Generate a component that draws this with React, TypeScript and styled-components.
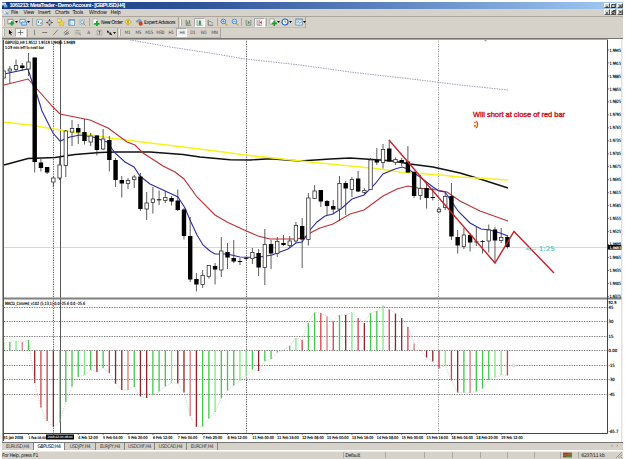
import React from 'react';
import styled, { createGlobalStyle } from 'styled-components';

const GlobalStyle = createGlobalStyle`
  body {
    margin: 0;
    background: #fff;
    overflow: hidden;
  }
`;

const face = '#d6d2ca';

const Terminal = styled.div`
  box-sizing: border-box;
  width: 625px;
  height: 459px;
  padding: 2px 2px 0 2px;
  display: flex;
  flex-direction: column;
  background: #fff;
  font-family: 'DejaVu Sans Condensed', 'Liberation Sans', sans-serif;
  font-size: 5px;
  color: #111;
  white-space: nowrap;
  cursor: default;
`;

const TitleBar = styled.header`
  height: 6.5px;
  flex: none;
  display: flex;
  align-items: center;
  background: linear-gradient(90deg, #17377f 0%, #2d5196 30%, #6488c4 65%, #a3cbf4 100%);
  color: #fff;
`;

const TitleText = styled.span`
  flex: 1;
  margin-left: 1.5px;
  font: bold 5.6px/7px 'Liberation Sans', sans-serif;
  letter-spacing: -0.53px;
`;

const MenuBar = styled.nav`
  height: 8px;
  flex: none;
  display: flex;
  align-items: center;
  background: ${face};
  border-bottom: 1px solid #aaa79f;
  box-sizing: border-box;
`;

const MenuItem = styled.span<{ $width: number }>`
  width: ${(p) => p.$width}px;
  font-size: 5.4px;
  line-height: 7px;
  letter-spacing: -0.25px;
`;

const WindowButtons = styled.div`
  margin-left: auto;
  display: flex;
`;

const WindowButton = styled.span<{ $gap?: boolean }>`
  box-sizing: border-box;
  width: 6px;
  height: 5.5px;
  margin-left: ${(p) => (p.$gap ? 1.5 : 0)}px;
  display: flex;
  background: #d4d0c8;
  border: solid #fff;
  border-width: 0.5px 1px 1px 0.5px;
  border-right-color: #555;
  border-bottom-color: #555;
`;

const Toolbar = styled.div<{ $height: number }>`
  height: ${(p) => p.$height}px;
  flex: none;
  display: flex;
  align-items: center;
  background: ${face};
`;

const ToolbarEdge = styled.div`
  height: 1.5px;
  flex: none;
  background: #77756f;
`;

const ToolGroup = styled.div<{ $width: number }>`
  box-sizing: border-box;
  width: ${(p) => p.$width}px;
  height: 100%;
  display: flex;
  align-items: center;
  border-right: 1px solid #aaa69e;
  box-shadow: inset 0 -1px #c2beb6;
`;

const Grip = styled.span`
  width: 1px;
  height: 7px;
  margin: 0 1px;
  flex: none;
  background: #f4f2ee;
  border-right: 1px solid #b1ada4;
`;

const ToolButton = styled.span<{ $width?: number; $pressed?: boolean }>`
  box-sizing: border-box;
  width: ${(p) => p.$width ?? 11}px;
  height: 9px;
  flex: none;
  display: flex;
  align-items: center;
  justify-content: center;
  font-size: 4.6px;
  letter-spacing: -0.35px;
  color: #444;
  background: ${(p) => (p.$pressed ? '#f4f2ee' : 'transparent')};
  border: ${(p) => (p.$pressed ? '1px solid' : '0')};
  border-color: #aaa #fff #fff #aaa;
`;

const Label = styled.span<{ $width: number }>`
  width: ${(p) => p.$width}px;
  flex: none;
  font-size: 5.3px;
  letter-spacing: -0.42px;
  color: #000;
`;

const Separator = styled.span`
  width: 1px;
  height: 8px;
  flex: none;
  margin: 0 1px;
  background: #aba79f;
`;

const ChartFrame = styled.main`
  height: 403px;
  flex: none;
  border-left: 1px solid #a7a59f;
  background: #fff;
`;

const Chart = styled.svg`
  display: block;
`;

const TabStrip = styled.div`
  height: 7.5px;
  flex: none;
  display: flex;
  background: ${face};
  border-top: 1px solid #777;
  box-sizing: border-box;
`;

const Tab = styled.span<{ $width: number; $active?: boolean }>`
  box-sizing: border-box;
  width: ${(p) => p.$width}px;
  flex: none;
  text-align: center;
  font-size: 5px;
  line-height: 6px;
  letter-spacing: -0.38px;
  color: ${(p) => (p.$active ? '#000' : '#444')};
  background: ${(p) => (p.$active ? '#fff' : 'transparent')};
  border-right: 1px solid #88857e;
`;

const TabArrows = styled.span`
  margin-left: auto;
  width: 12px;
  font-size: 5px;
  line-height: 5px;
  word-spacing: 2px;
  color: #555;
`;

const StatusBar = styled.footer`
  height: 8.5px;
  flex: none;
  margin-top: 1px;
  display: flex;
  align-items: center;
  background: ${face};
  border-top: 1px solid #eceae6;
  box-sizing: border-box;
`;

const StatusCell = styled.span<{ $width: number }>`
  box-sizing: border-box;
  width: ${(p) => p.$width}px;
  height: 6px;
  flex: none;
  display: flex;
  align-items: center;
  font-size: 5.2px;
  letter-spacing: -0.33px;
  border-right: 1px solid #aaa79f;
  &:last-of-type {
    border-right: 0;
  }
`;

const icons: Record<string, React.ReactNode> = {
  app: <><rect x="0" y="1" width="6" height="4" fill="#fff" /><path d="M3 4h5v4H3z" fill="#75c4eb" /><path d="M1 3h4M4 6h3" stroke="#397fb5" /></>,
  newChart: <><path d="M1 1.5h6v5H1z" fill="#f8fff8" stroke="#789" /><path d="M3 6h5M5.5 3.5v5" stroke="#16a82b" strokeWidth="2" /></>,
  profiles: <><path d="M1 1.5h6v4H1z" fill="#eaf5ff" stroke="#568bc5" /><path d="M3 4.5h5.5v3.5H3z" fill="#b9dcfa" stroke="#568bc5" /></>,
  market: <><path d="M1 1h7v7H1z" fill="#fff" stroke="#5894c4" /><path d="M2 4l2-2v4z" fill="#17a34b" /><path d="M5 5l2-1v3z" fill="#d2332c" /></>,
  target: <><circle cx="4.5" cy="4.5" r="2.5" fill="none" stroke="#777" /><path d="M4.5 0v3M4.5 6v3M0 4.5h3M6 4.5h3" stroke="#444" /></>,
  folder: <><path d="M0 1h5v4H0z" fill="#f5df6c" stroke="#a99538" strokeWidth=".5" /><path d="M5 3l1.2 2 2.3.3-1.6 1.5.4 2.1L5 7.8 3 8.9l.3-2.1L2 5.3 4 5z" fill="#ffda35" stroke="#a88b1e" strokeWidth=".4" /></>,
  panel: <><path d="M1 1h7.5v7H1z" fill="#fff" stroke="#4a83bd" /><path d="M1 1.5h7M2.5 2v6" stroke="#4a83bd" /><path d="M4 4h3M4 6h3" stroke="#9bb" strokeWidth=".6" /></>,
  tester: <><path d="M1 1h6v6H1z" fill="#eef5fa" stroke="#8198aa" strokeWidth=".6" /><circle cx="4" cy="4" r="2" fill="none" stroke="#5992bd" /><path d="M5.5 5.5l3 3" stroke="#ad8850" /></>,
  order: <><path d="M1 1h5v6H1z" fill="#fff" stroke="#999" strokeWidth=".6" /><path d="M2.5 6.5h6M5.5 3.5v5.5" stroke="#15a72f" strokeWidth="2" /></>,
  warning: <><path d="M4.5.8l3.8 3.7-3.8 3.7L.8 4.5z" fill="#ffe544" stroke="#aa931c" strokeWidth=".7" /><path d="M4.5 2.5v3M4.5 6v1" stroke="#655" /></>,
  expert: <><path d="M1 4l4-3 3 3-3 2z" fill="#62a9df" stroke="#447ba4" strokeWidth=".4" /><path d="M1 5h4v3z" fill="#e7c257" /><circle cx="6.5" cy="6.5" r="2.2" fill="#d83722" /></>,
  bars: <path d="M1.5 1v7H8M3.5 3v4M3.5 6h1M6 1.5v5M5 3h1" fill="none" stroke="#2f6b40" strokeWidth=".9" />,
  candles: <><path d="M1.5 1v7H8" fill="none" stroke="#555" strokeWidth=".7" /><path d="M4 3h2v4H4zM5 1v2" fill="#15a944" stroke="#16823a" strokeWidth=".7" /></>,
  line: <><path d="M1.5 1v7H8" fill="none" stroke="#444" strokeWidth=".8" /><path d="M2 4l2-1 3 2h1" fill="none" stroke="#478260" strokeWidth=".8" /></>,
  zoomIn: <><path d="M5 5l3.4 3.4" stroke="#cba738" strokeWidth="1.4" /><circle cx="3.8" cy="3.8" r="2.6" fill="#d5ecff" stroke="#397bc0" /><path d="M2.5 3.8h2.6M3.8 2.5v2.6" stroke="#397bc0" strokeWidth=".8" /></>,
  zoomOut: <><path d="M5 5l3.4 3.4" stroke="#cba738" strokeWidth="1.4" /><circle cx="3.8" cy="3.8" r="2.6" fill="#d5ecff" stroke="#397bc0" /><path d="M2.5 3.8h2.6" stroke="#397bc0" strokeWidth=".8" /></>,
  scroll: <><path d="M1.5 1v7H8M7.5 1v7" fill="none" stroke="#555" strokeWidth=".7" /><path d="M3.5 2l3 2.5-3 2.5z" fill="#27a852" /></>,
  shift: <><path d="M1.5 1v7H8M4 1v7" fill="none" stroke="#555" strokeWidth=".7" /><path d="M7.5 2.5l-3 2 3 2z" fill="#bd3434" /></>,
  indicators: <><path d="M1 1h5v6H1z" fill="#fff" stroke="#888" strokeWidth=".7" /><path d="M3 6h6M6 3v6" stroke="#16a52b" strokeWidth="2" /></>,
  clock: <><circle cx="4.5" cy="4.5" r="3.4" fill="#f6fbff" stroke="#2866b4" strokeWidth="1.3" /><path d="M4.5 2.5v2l1.5 1" fill="none" stroke="#345" strokeWidth=".7" /></>,
  template: <><path d="M.8 1h7.5v7H.8z" fill="#d8eaf8" stroke="#6087a5" strokeWidth=".8" /><path d="M1 2h7M2 5l2-1 1 2 3-2" fill="none" stroke="#6087a5" strokeWidth=".7" /></>,
  cursor: <path d="M2.5 1l4.5 4H5l1 2.7-1 .4-1-2.7L2.5 7z" fill="#111" />,
  cross: <path d="M4.5 1v7M1 4.5h7" stroke="#444" strokeWidth=".8" />,
  vertical: <path d="M4.5 1v7" stroke="#555" strokeWidth=".8" />,
  horizontal: <path d="M1.5 4.5h6.5" stroke="#555" strokeWidth=".9" />,
  diagonal: <path d="M1.5 8l6-7" stroke="#555" strokeWidth=".8" />,
  channel: <path d="M1 5l5-4M2 8l6-5M2 6l4 1M4 4l4 2" fill="none" stroke="#555" strokeWidth=".8" />,
  fibo: <><path d="M1 2h7M1 4.2h7M1 6.4h7" stroke="#777" strokeDasharray="1 .6" strokeWidth=".8" /><path d="M6 6h2v2.5" fill="none" stroke="#777" strokeWidth=".7" /></>,
  textBox: <><path d="M1.3 1.3h6.4v6.4H1.3z" fill="none" stroke="#666" strokeWidth=".6" strokeDasharray="1 .5" /><path d="M3 3h3M4.5 3v4" stroke="#444" strokeWidth=".8" /></>,
  arrows: <path d="M1 2l3 .5-.8 1 2 1.5.8-1 2 4-4-1 .8-1-2-1.5-.8 1z" fill="#222" />,
};

const Icon: React.FC<{ name: string; size?: number }> = ({ name, size = 8 }) => (
  <svg width={size} height={size} viewBox="0 0 9 9" style={{ flex: 'none' }}>{icons[name]}</svg>
);

const Caret = () => (
  <svg width="3" height="2" viewBox="0 0 3 2"><path d="M0 0h3L1.5 2z" fill="#111" /></svg>
);

const menus: [string, number][] = [
  ['File', 12.5], ['View', 14.5], ['Insert', 17], ['Charts', 17.5], ['Tools', 16.5], ['Window', 21.5], ['Help', 14],
];

const periods = ['M1', 'M5', 'M15', 'M30', 'H1', 'H4', 'D1', 'W1', 'MN'];

const tabs: [string, number][] = [
  ['EURUSD,H4', 32], ['GBPUSD,H4', 31], ['USDJPY,H4', 31], ['EURJPY,H4', 29], ['USDCHF,H4', 30], ['USDCAD,H4', 32], ['EURCHF,H4', 31],
];

const barX = (i: number) => 3.6 + i * 6.22;

// high, body top, body bottom, low, 1 for a bear candle
const candles = [
  [67, 71, 78, 79, 0], [66, 69, 71, 83, 0], [59.5, 65.5, 69.5, 71, 0], [63, 65.5, 68, 71, 1], [53, 62, 69, 76, 0],
  [57.5, 57.5, 162, 172.5, 1], [159, 162.5, 168, 171.5, 1], [167, 167, 172.5, 174, 1], [177, 178, 182, 187, 0], [156, 165, 178, 180, 0],
  [130, 131, 165.5, 177, 0], [120, 128.5, 132, 146, 0], [124, 128, 132.5, 144, 1], [119, 132, 141, 144.5, 1], [133, 136, 142, 146, 0],
  [135, 135.5, 150, 155.5, 1], [129, 139, 149, 150, 0], [136, 140, 160, 171.5, 1], [158, 160, 180, 187, 1], [176, 180, 183.5, 197.5, 1],
  [178, 180.5, 183.5, 189, 0], [175, 177, 179.5, 188, 0], [173, 176.5, 209, 211, 1], [192, 203, 209, 220, 0], [187, 199, 202.5, 213.5, 0],
  [190.5, 199.3, 200.3, 205, 1], [191, 197.5, 200.5, 203, 0], [196, 198, 201.5, 205.5, 1], [189.5, 200.5, 210, 211, 1], [208, 209.5, 236, 239.5, 1],
  [217, 236, 279.5, 282, 1], [273, 279, 284.5, 291.5, 1], [270, 275.5, 284.5, 288, 0], [265, 265.5, 276.5, 278.5, 0], [263, 266, 269.5, 284.5, 1],
  [237, 251, 270, 277, 0], [243, 252, 257.5, 269, 1], [240, 258, 261.5, 263, 1], [258, 261, 262, 265, 1], [257, 257.8, 258.8, 260, 1],
  [248, 252.5, 258.5, 264, 0], [249, 253, 267.5, 276, 1], [229, 244.5, 267.5, 285, 0], [240, 244, 253.5, 269, 1], [237, 241.5, 253.5, 257, 0],
  [235, 243, 245, 246, 1], [236, 241, 245.5, 248, 0], [222, 225.5, 241, 243, 0], [218, 226, 239.5, 268, 1], [193, 198, 239.5, 245.5, 0],
  [185, 191, 198.5, 199, 0], [190, 190, 201.5, 207, 1], [200, 201, 206, 215, 1], [200, 206, 209.5, 214, 1], [176, 183.5, 209, 221, 0],
  [181, 183, 188.5, 215, 1], [177, 179.5, 189.5, 197, 0], [171, 178.5, 191.5, 192, 1], [188, 190.5, 192.5, 194, 0], [158, 160, 189.5, 190, 0],
  [148, 160, 162.5, 165, 1], [144, 149.5, 162.5, 168.5, 0], [140, 148.5, 161.5, 162, 1], [157.5, 159.5, 162.5, 165, 0], [158, 160, 162, 166, 1],
  [146, 161.5, 172.5, 173, 1], [171, 172, 196, 198, 1], [175, 188.5, 195.5, 200, 0], [182, 188, 198, 208.5, 1], [188, 197, 198, 200.5, 1],
  [207, 209.2, 211.8, 213, 0], [192, 196.5, 207.5, 210, 0], [183, 196, 236.5, 240, 1], [230, 237, 245.5, 253.5, 1], [228, 235, 246.5, 249, 0],
  [233, 235, 242.5, 251.5, 1], [227, 241.5, 242.3, 246, 1], [240, 241, 241.8, 253.5, 1], [224.5, 230, 241, 252.5, 0], [227, 229.5, 240.5, 262, 1],
  [228, 237.5, 240.5, 243, 0], [235, 237, 247, 248.5, 1],
];

const histogram = [
  343, 342, 341, 342, 340, 383, 407.5, 421, 427, 422.5, 402, 386.5, 377, 375, 370, 372, 368, 373, 384, 390,
  390, 387, 396.5, 398, 395, 391.5, 386.5, 383, 383.5, 392.5, 416, 427, 426.5, 418.5, 412, 398, 390.5, 385.5, 381, 376,
  369.5, 371, 361, 359, 352.5, 350, 346, 338, 340, 323, 312.5, 313, 316.5, 321.5, 315, 315, 312.5, 318, 323, 313,
  311, 305.5, 309.5, 313.5, 318, 327, 343.5, 350, 357.5, 361.5, 368.5, 365.5, 380.5, 392.5, 392.5, 393, 391.5, 388.5, 380, 377.5,
  375, 375.5,
];
// g/G rising, r/R/D falling; one letter per bar
const shades = 'GGgrGDRRDgGGGgGDGRDDrGDDGGGgDDrDGGgGGGggGDGGGGGgRGGRrRGDgRDGGgRDDRrRDDRgRDGrGGGggR';
const shadeColors: Record<string, string> = { g: '#84e584', G: '#43c64a', r: '#d67b7b', R: '#cf4048', D: '#8f2228' };

const blueLine = '4,74 28,69 34,88 37,95 42,111 48,123 53,133 60,141 70,137 80,135 93,137 107,142 115,153 125,162 134,167 140,176 150,184 163,190 178,197 185,208 190,220 197,235 203,245 210,251 215,254 227,254 240,257 257,257.5 272,255 288,249 296,243 302,242 307,235 310,230 317,222 325,216 333,214 342,208 352,199 364,195 375,184 383,174 395,169 402,167 408,169 420,177 433,187 439,191 445,192 452,202 458,211 470,223 481,229 490,230 500,233 508,236';
const redLine = '4,85 28,79 37,89 53,107 60,114 90,120 108,128 127,142 135,145 143,153 160,164 163,166 175,172 184,179 197,197 215,215 227,222 242,229 258,236 270,239 297,239 305,237 310,233 320,228 333,224 350,214 364,210 383,196 397,189 408,186 418,188 437,190 447,192 460,201 480,211 508,221';
const yellowLine = '4,122 30,125 60,130 110,138 150,143 200,149 246,155 310,162 380,169 400,172 440,175 460,177 508,180';
const blackLine = '4,165 28,158.5 55,157.5 75,154.5 100,152.5 115,152 150,152 183,154.5 200,157 230,159.7 250,160 270,158.8 300,161 330,159 350,158 380,160 393,161 410,164 433,167 460,173 480,179 508,188';
const slowLine = '125,39 170,47 210,53 245,59 300,65 350,72 420,80 460,85 508,90';

const dates = [
  '31 Jan 2008', '1 Feb 08:00', '', '4 Feb 12:00', '5 Feb 04:00', '5 Feb 20:00', '6 Feb 12:00', '7 Feb 04:00', '7 Feb 20:00',
  '8 Feb 12:00', '11 Feb 00:00', '11 Feb 16:00', '12 Feb 08:00', '13 Feb 00:00', '13 Feb 16:00', '14 Feb 08:00', '15 Feb 00:00',
  '15 Feb 16:00', '18 Feb 04:00', '18 Feb 20:00', '19 Feb 12:00',
];

const levels: [string, number][] = [
  ['45', 307.5], ['30', 321.5], ['15', 336.5], ['0.00', 350.5], ['-15', 365.5], ['-30', 379.5], ['-45', 394.5],
];

const AxisText = styled.text<{ $size?: number; $color?: string }>`
  font-family: 'DejaVu Sans Condensed', sans-serif;
  font-size: ${(p) => p.$size ?? 4.3}px;
  fill: ${(p) => p.$color ?? '#000'};
  stroke: ${(p) => p.$color ?? '#000'};
  stroke-width: 0.15px;
`;

const Note = styled.text`
  font-family: 'Liberation Sans', sans-serif;
  font-size: 6.8px;
  fill: #cc1a22;
  stroke: #cc1a22;
  stroke-width: 0.35px;
`;

const PriceChart = () => (
  <Chart width="620" height="403" viewBox="3 39 620 403">
    <rect x="3" y="39" width="620" height="403" fill="#fff" />
    <path d="M3 247.5H607" stroke="#d8d8d8" />
    <path d="M53.5 39V433M246.5 39V433" stroke="#555" strokeDasharray="1.2 1.2" />
    <path d="M438.5 39V433" stroke="#999" strokeDasharray="1.2 1.2" />
    <path d="M60.5 39V433" stroke="#555" />

    <polyline points={slowLine} fill="none" stroke="#8a84ad" strokeWidth=".8" strokeDasharray="1.5 1" />
    <polyline points={blackLine} fill="none" stroke="#111" strokeWidth="1.4" />
    <polyline points={yellowLine} fill="none" stroke="#f7f31c" strokeWidth="1.7" />
    <polyline points={redLine} fill="none" stroke="#bd2f34" strokeWidth="1.1" />
    <polyline points={blueLine} fill="none" stroke="#2a2da8" strokeWidth="1.1" />

    {candles.map(([high, top, bottom, low, bear], i) => (
      <g key={i}>
        <path d={`M${barX(i)} ${high}V${low}`} stroke="#333" strokeWidth=".8" />
        <rect
          x={barX(i) - (bear ? 2.2 : 1.7)}
          y={top}
          width={bear ? 4.4 : 3.4}
          height={bottom - top}
          fill={bear ? '#000' : '#fff'}
          stroke={bear ? 'none' : '#333'}
          strokeWidth=".8"
        />
      </g>
    ))}

    <polyline points="389,140 495,263 514,231.5 554,273" fill="none" stroke="#c4242a" strokeWidth="1.4" />
    <Note x="473" y="117.2" textLength="92" lengthAdjust="spacingAndGlyphs">Will short at close of red bar</Note>
    <Note x="474" y="126">;)</Note>
    <AxisText x="525" y="251" textLength="30" lengthAdjust="spacingAndGlyphs" $size={6.5} $color="#4ec4cb">{'<-- 1:25'}</AxisText>

    <AxisText x="5" y="44" textLength="70" lengthAdjust="spacingAndGlyphs">GBPUSD,H4  1.9512 1.9519 1.9486 1.9489</AxisText>
    <AxisText x="5" y="48.5" textLength="39" lengthAdjust="spacingAndGlyphs" $size={4}>1:25 min left to next bar</AxisText>
    <path d="M483.5 39.5h4l-2 2z" fill="#999" />

    <rect x="3" y="297.5" width="619" height="2" fill="#808080" />
    {levels.map(([text, y]) => (
      <g key={text}>
        <path d={`M4 ${y}H607`} stroke="#555" strokeWidth=".8" strokeDasharray="1.3 1.2" />
        <AxisText x="608.5" y={y + 1.7}>{text}</AxisText>
      </g>
    ))}
    <AxisText x="608.5" y="303.5" $size={4}>52.5</AxisText>
    <AxisText x="608.5" y="433">-65.7</AxisText>
    <AxisText x="5" y="304.8" textLength="80" lengthAdjust="spacingAndGlyphs">MACD_Colored_v102 (5,13,1) 0.0 -25.6 0.0 -25.6</AxisText>

    {histogram.map((y, i) => (
      <path key={i} d={`M${barX(i)} 350.5V${y}`} stroke={shadeColors[shades[i]]} strokeWidth="1.3" />
    ))}
    <polyline points={histogram.map((y, i) => `${barX(i)},${y}`).join(' ')} fill="none" stroke="#bbb" strokeWidth=".6" strokeDasharray="1.3 1.1" />
    <circle cx="513.5" cy="365.5" r="1.3" fill="#fff" stroke="#aaa" strokeWidth=".5" />

    <path d="M607.5 39V433.5H3" fill="none" stroke="#444" />
    <path d="M3.5 39V441" stroke="#555" />
    {Array.from({ length: 20 }, (_, i) => (
      <g key={i}>
        <path d={`M607 ${50 + i * 12.97}h2`} stroke="#444" strokeWidth=".7" />
        <AxisText
          x="609.5"
          y={(i === 15 ? 50.1 : 51.6) + i * 12.97}
          textLength="11.5"
          lengthAdjust="spacingAndGlyphs"
          $size={i === 15 ? 3.4 : 4.3}
        >
          {(1.9945 - i * 0.003).toFixed(4)}
        </AxisText>
      </g>
    ))}
    <rect x="608" y="245" width="14" height="4.6" fill="#000" />
    <AxisText x="609.5" y="248.8" textLength="11.5" lengthAdjust="spacingAndGlyphs" $size={3.4} $color="#fff">1.9483</AxisText>

    {dates.map((text, i) => (
      <g key={i}>
        <path d={`M${barX(i * 4)} 433v2`} stroke="#444" strokeWidth=".7" />
        {text && (
          <AxisText
            x={barX(i * 4)}
            y="438.8"
            textLength={i === 1 ? 17.5 : text.length > 11 ? 21.5 : 19.5}
            lengthAdjust="spacingAndGlyphs"
            $size={i === 1 ? 3.3 : 3.9}
          >
            {text}
          </AxisText>
        )}
      </g>
    ))}
    <rect x="46" y="434.5" width="28" height="5" fill="#000" />
    <AxisText x="47.5" y="438.3" textLength="25" lengthAdjust="spacingAndGlyphs" $size={3.1} $color="#ddd">2008.02.04 08:00</AxisText>

    <rect x="3" y="39" width="605" height="1" fill="#aaa9a3" />
    <path d="M621.8 39V442" stroke="#d5d3cf" />
  </Chart>
);

const ControlButtons: React.FC<{ restored?: boolean }> = ({ restored }) => (
  <WindowButtons>
    <WindowButton><svg width="5" height="4"><path d="M1 3h2" stroke="#111" /></svg></WindowButton>
    <WindowButton>
      <svg width="5" height="4">
        <path d={restored ? 'M2 .5h2v2M1 1.5h2v2H1z' : 'M.7.5h3.3v3H.7z'} fill="none" stroke="#111" strokeWidth=".7" />
      </svg>
    </WindowButton>
    <WindowButton $gap><svg width="5" height="4"><path d="M1 .5l3 3M4 .5l-3 3" stroke="#111" strokeWidth=".8" /></svg></WindowButton>
  </WindowButtons>
);

const App: React.FC = () => (
  <>
    <GlobalStyle />
    <Terminal>
      <TitleBar>
        <Icon name="app" size={6} />
        <TitleText>1061213: MetaTrader - Demo Account - [GBPUSD,H4]</TitleText>
        <ControlButtons />
      </TitleBar>

      <MenuBar>
        <ToolButton $width={9}><Icon name="app" size={5} /></ToolButton>
        {menus.map(([text, width]) => <MenuItem key={text} $width={width}>{text}</MenuItem>)}
        <ControlButtons restored />
      </MenuBar>

      <Toolbar $height={11}>
        <ToolGroup $width={177}>
          <Grip />
          <ToolButton $width={12}><Icon name="newChart" /><Caret /></ToolButton>
          <ToolButton $width={13}><Icon name="profiles" /><Caret /></ToolButton>
          <Separator />
          <ToolButton $width={10}><Icon name="market" size={7} /></ToolButton>
          <ToolButton><Icon name="target" size={7} /></ToolButton>
          <ToolButton><Icon name="folder" /></ToolButton>
          <ToolButton><Icon name="panel" size={7} /></ToolButton>
          <ToolButton><Icon name="tester" size={7} /></ToolButton>
          <Separator />
          <ToolButton $width={10}><Icon name="order" size={8} /></ToolButton>
          <Label $width={22}>New Order</Label>
          <ToolButton $width={10}><Icon name="warning" /></ToolButton>
          <ToolButton><Icon name="expert" /></ToolButton>
          <Label $width={31}>Expert Advisors</Label>
        </ToolGroup>
        <ToolGroup $width={127}>
          <Grip />
          <ToolButton><Icon name="bars" size={7} /></ToolButton>
          <ToolButton $pressed><Icon name="candles" size={7} /></ToolButton>
          <ToolButton><Icon name="line" size={7} /></ToolButton>
          <Separator />
          <ToolButton $width={10}><Icon name="zoomIn" /></ToolButton>
          <ToolButton><Icon name="zoomOut" /></ToolButton>
          <Separator />
          <ToolButton><Icon name="scroll" size={7} /></ToolButton>
          <ToolButton $pressed><Icon name="shift" size={7} /></ToolButton>
          <Separator />
          <ToolButton $width={12}><Icon name="indicators" /><Caret /></ToolButton>
          <ToolButton $width={13}><Icon name="clock" /><Caret /></ToolButton>
          <ToolButton $width={14}><Icon name="template" /><Caret /></ToolButton>
        </ToolGroup>
      </Toolbar>

      <Toolbar $height={10}>
        <ToolGroup $width={116}>
          <Grip />
          <ToolButton $width={9}><Icon name="cursor" size={7} /></ToolButton>
          <ToolButton $pressed><Icon name="cross" size={7} /></ToolButton>
          <Separator />
          <ToolButton $width={10}><Icon name="vertical" size={7} /></ToolButton>
          <ToolButton><Icon name="horizontal" size={7} /></ToolButton>
          <ToolButton><Icon name="diagonal" size={7} /></ToolButton>
          <ToolButton><Icon name="channel" size={7} /></ToolButton>
          <ToolButton><Icon name="fibo" size={7} /></ToolButton>
          <ToolButton>A</ToolButton>
          <ToolButton><Icon name="textBox" size={7} /></ToolButton>
          <ToolButton $width={12}><Icon name="arrows" size={7} /><Caret /></ToolButton>
        </ToolGroup>
        <ToolGroup $width={102.5}>
          <Grip />
          {periods.map((text) => <ToolButton key={text} $width={10.9} $pressed={text === 'H4'}>{text}</ToolButton>)}
        </ToolGroup>
      </Toolbar>
      <ToolbarEdge />

      <ChartFrame><PriceChart /></ChartFrame>

      <TabStrip>
        {tabs.map(([text, width]) => <Tab key={text} $width={width} $active={text === 'GBPUSD,H4'}>{text}</Tab>)}
        <TabArrows>‹ ›</TabArrows>
      </TabStrip>

      <StatusBar>
        <StatusCell $width={342}>For Help, press F1</StatusCell>
        <StatusCell $width={42}>&nbsp;Default</StatusCell>
        <StatusCell $width={39} />
        <StatusCell $width={28} />
        <StatusCell $width={28} />
        <StatusCell $width={27} />
        <StatusCell $width={27} />
        <StatusCell $width={26} />
        <StatusCell $width={18}>
          <svg width="12" height="6" viewBox="0 0 12 6">
            <rect x="2" y=".5" width="9" height="5" fill="#9b5d39" />
            <path d="M2 1.5h5M2 4.5h3" stroke="#b52e27" />
            <path d="M5 4.5h6M8 2h3" stroke="#4e8b3c" />
          </svg>
        </StatusCell>
        <StatusCell $width={35}>&nbsp;&nbsp;6237/11 kb</StatusCell>
        <svg width="8" height="6" viewBox="0 0 8 6"><path d="M2 6l6-6M4.5 6L8 2.5M7 6l1-1" stroke="#888" strokeWidth=".8" /></svg>
      </StatusBar>
    </Terminal>
  </>
);

export default App;
